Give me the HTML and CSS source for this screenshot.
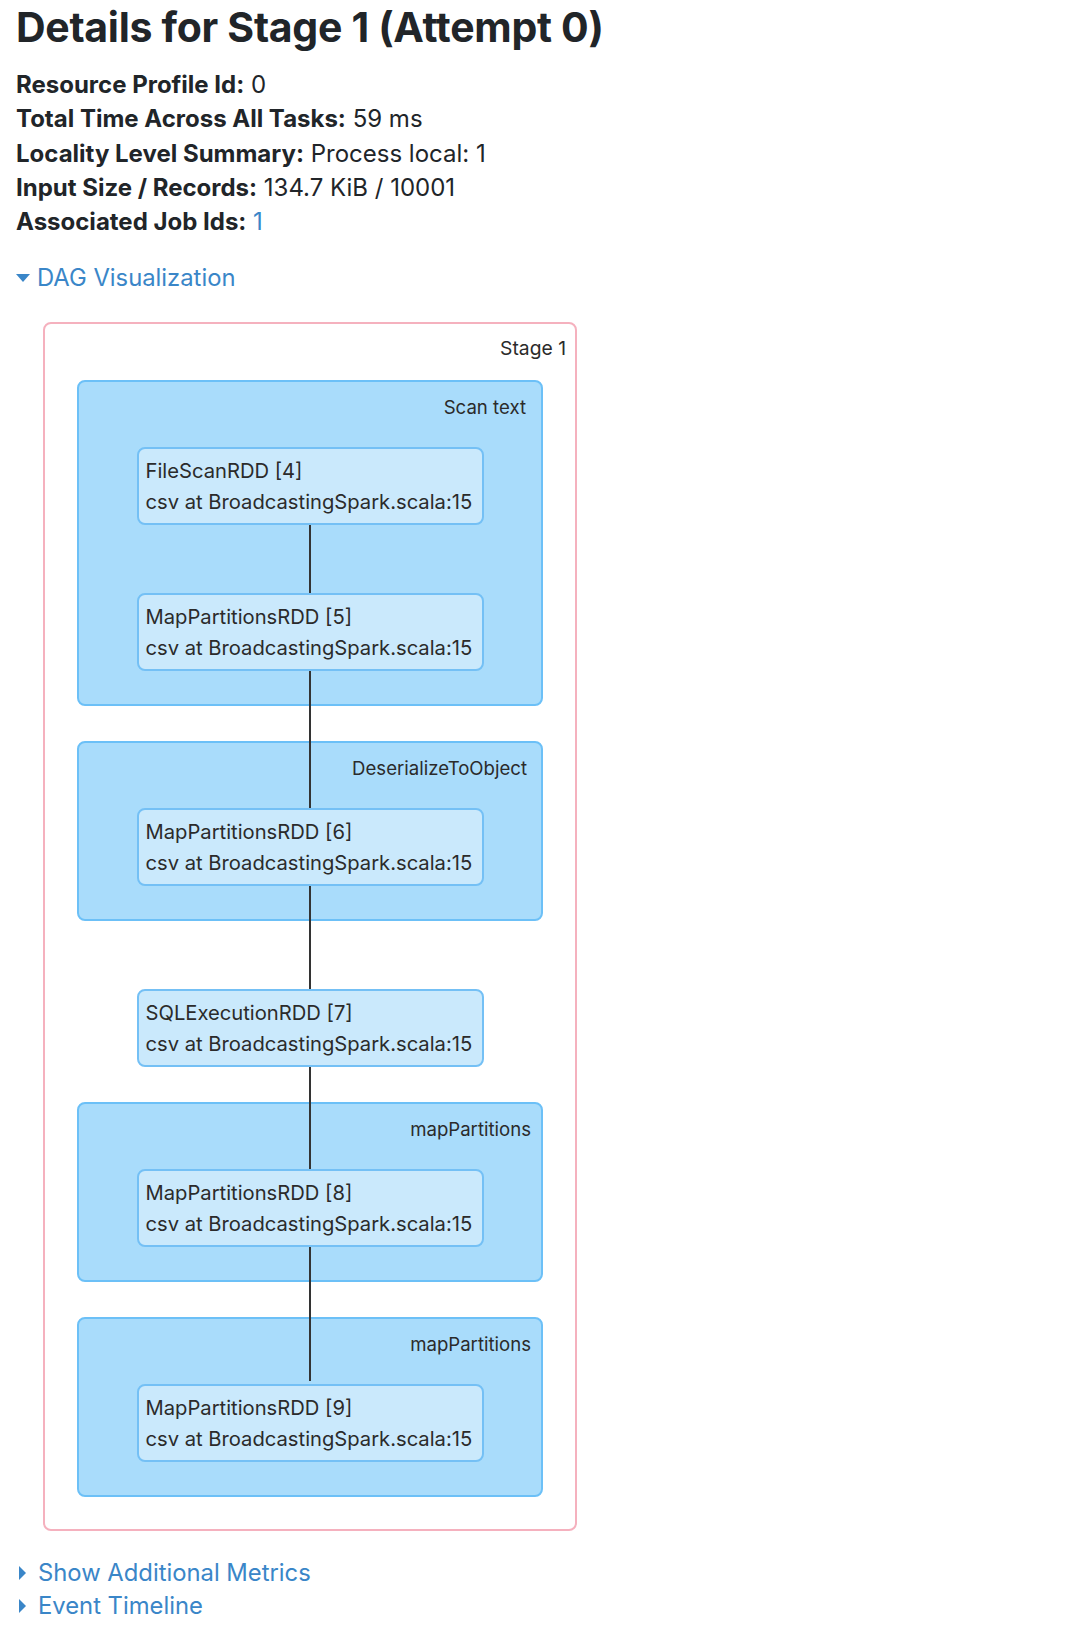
FILE: index.html
```html
<!DOCTYPE html>
<html>
<head>
<meta charset="utf-8">
<title>Stage 1</title>
<link rel="stylesheet" href="styles.css">
</head>
<body>
<main class="page">
  <h1 class="title">Details for Stage 1 (Attempt 0)</h1>
  <ul class="summary">
    <li><strong>Resource Profile Id:</strong> 0</li>
    <li><strong>Total Time Across All Tasks:</strong> 59 ms</li>
    <li><strong>Locality Level Summary:</strong> Process local: 1</li>
    <li><strong>Input Size / Records:</strong> 134.7 KiB / 10001</li>
    <li><strong>Associated Job Ids:</strong> <a class="link" href="#">1</a></li>
  </ul>

  <div class="toggle toggle-dag">
    <span class="arrow-down"></span>
    <a class="link" href="#">DAG Visualization</a>
  </div>

  <div class="stage">
    <div class="edge"></div>
    <div class="stage-label">Stage 1</div>

    <div class="cluster">
      <div class="cluster-label pad-a">Scan text</div>
      <div class="node">
        <div>FileScanRDD [4]</div>
        <div>csv at BroadcastingSpark.scala:15</div>
      </div>
      <div class="node node-next">
        <div>MapPartitionsRDD [5]</div>
        <div>csv at BroadcastingSpark.scala:15</div>
      </div>
    </div>

    <div class="cluster cluster-gap">
      <div class="cluster-label pad-b">DeserializeToObject</div>
      <div class="node">
        <div>MapPartitionsRDD [6]</div>
        <div>csv at BroadcastingSpark.scala:15</div>
      </div>
    </div>

    <div class="solo">
      <div class="node">
        <div>SQLExecutionRDD [7]</div>
        <div>csv at BroadcastingSpark.scala:15</div>
      </div>
    </div>

    <div class="cluster cluster-gap">
      <div class="cluster-label pad-c">mapPartitions</div>
      <div class="node">
        <div>MapPartitionsRDD [8]</div>
        <div>csv at BroadcastingSpark.scala:15</div>
      </div>
    </div>

    <div class="cluster cluster-gap">
      <div class="cluster-label pad-c">mapPartitions</div>
      <div class="node">
        <div>MapPartitionsRDD [9]</div>
        <div>csv at BroadcastingSpark.scala:15</div>
      </div>
    </div>
  </div>

  <div class="toggle toggle-metrics">
    <span class="arrow-right"></span>
    <a class="link" href="#">Show Additional Metrics</a>
  </div>
  <div class="toggle toggle-timeline">
    <span class="arrow-right"></span>
    <a class="link" href="#">Event Timeline</a>
  </div>
</main>
</body>
</html>
```

FILE: styles.css
```css
* { box-sizing: border-box; }

html, body {
  margin: 0;
  padding: 0;
  background: #ffffff;
}

body {
  font-family: Inter, "Noto Sans", "Liberation Sans", sans-serif;
  color: #212529;
}

.page {
  padding: 0 0 0 16px;
}

.title {
  margin: 0;
  padding-top: 4px;
  font-size: 41px;
  line-height: 46px;
  font-weight: 700;
  letter-spacing: -0.3px;
  color: #212529;
}

.summary {
  list-style: none;
  margin: 18px 0 0;
  padding: 0;
  font-size: 24px;
  line-height: 34.3px;
}

.summary strong {
  font-weight: 700;
}

.link {
  color: #3a86c8;
  text-decoration: none;
}

.toggle {
  display: flex;
  align-items: center;
  font-size: 23.8px;
  line-height: 32px;
}

.toggle-dag {
  margin-top: 23px;
}

.arrow-down {
  width: 0;
  height: 0;
  border-left: 7.5px solid transparent;
  border-right: 7.5px solid transparent;
  border-top: 8px solid #3a86c8;
  margin-right: 7px;
}

.arrow-right {
  width: 0;
  height: 0;
  border-top: 7px solid transparent;
  border-bottom: 7px solid transparent;
  border-left: 7.5px solid #3a86c8;
  margin-left: 3px;
  margin-right: 12px;
}

.stage {
  position: relative;
  margin: 28px 0 0 27px;
  width: 534px;
  border: 2px solid #f5b1be;
  border-radius: 8px;
  padding: 0 0 32px 32px;
  font-size: 20.2px;
  color: #2b2b2b;
}

.edge {
  position: absolute;
  left: 264px;
  top: 200px;
  width: 2px;
  height: 857px;
  background: #333333;
  z-index: 1;
}

.stage-label {
  text-align: right;
  padding: 12px 9px 0 0;
  line-height: 24px;
  height: 56px;
  font-size: 19.3px;
}

.cluster {
  width: 466px;
  background: #a9dcfb;
  border: 2px solid #6cc0f7;
  border-radius: 8px;
  padding-bottom: 33px;
}

.cluster-gap {
  margin-top: 35px;
}

.cluster-label {
  text-align: right;
  padding-top: 13px;
  height: 65px;
  line-height: 24px;
  font-size: 18.6px;
}

.pad-a { padding-right: 15px; }
.pad-b { padding-right: 14px; }
.pad-c { padding-right: 10px; }

.node {
  position: relative;
  z-index: 2;
  width: 347px;
  height: 78px;
  margin: 0 auto;
  background: #cae9fc;
  border: 2px solid #74c0f5;
  border-radius: 8px;
  padding: 7px 0 0 7px;
  line-height: 30.5px;
  white-space: nowrap;
}

.node-next {
  margin-top: 68px;
}

.solo {
  width: 466px;
  padding-top: 68px;
}

.toggle-metrics {
  margin-top: 26px;
}

.toggle-timeline {
  margin-top: 1px;
}
```
